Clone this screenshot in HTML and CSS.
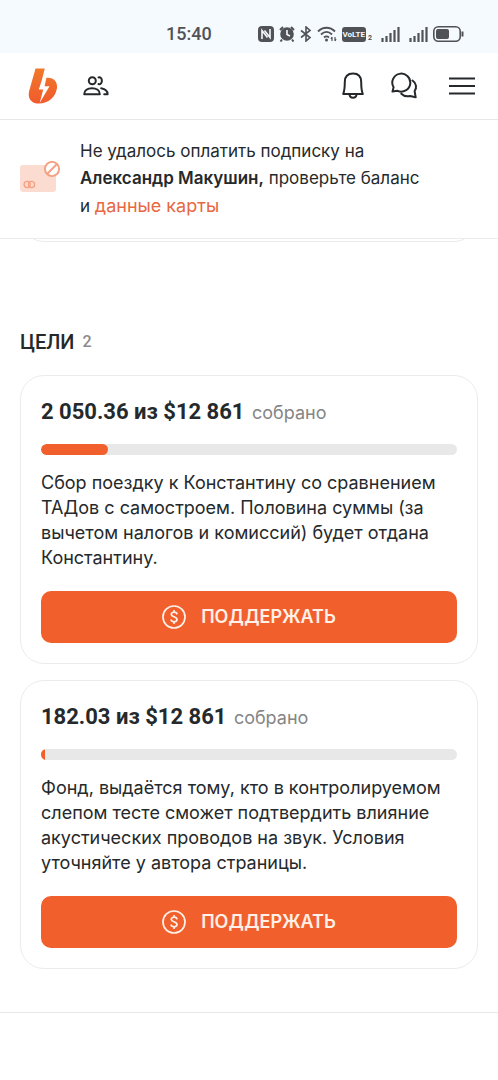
FILE: index.html
```html
<!DOCTYPE html>
<html lang="ru">
<head>
<meta charset="utf-8">
<meta name="viewport" content="width=device-width, initial-scale=1">
<title>Цели</title>
<link rel="stylesheet" href="styles.css">
</head>
<body>
<div class="status">
  <span class="status-time">15:40</span>
  <div class="status-icons">
    <svg width="16" height="16" viewBox="0 0 16 16"><rect width="16" height="16" rx="4" fill="#505256"/><path d="M4 13V4.500L9.500 11.500M12 3v8.500L6.500 4.500" fill="none" stroke="#f5faff" stroke-width="1.600"/></svg>
    <svg width="16" height="16" viewBox="0 0 16 16"><circle cx="8" cy="8" r="6.800" fill="#505256"/><path d="M1 4l3-3M15 4l-3-3M3 13.500L1.500 15.500M13 13.500l1.500 2" stroke="#505256" stroke-width="2"/><path d="M8 4v4.500l3 1.500" fill="none" stroke="#f5faff" stroke-width="1.600"/></svg>
    <svg width="12" height="16" viewBox="0 0 12 16"><path d="M1 4.500l9 7L6 15V1l4 3.500-9 7" fill="none" stroke="#505256" stroke-width="1.600"/></svg>
    <svg width="20" height="16" viewBox="0 0 20 16"><path d="M1 5.500c5-5 12-5 17 0M4 8.500c3.500-3.300 7.500-3.300 11 0M7 11.500c1.700-1.500 3.300-1.500 5 0" fill="none" stroke="#505256" stroke-width="1.800"/><circle cx="9.500" cy="14" r="1.500" fill="#505256"/><path d="M15 11v4M18 11v4M14 13l1-2M19 13l-1 2" stroke="#505256" stroke-width="1.200"/></svg>
    <span class="volte">VoLTE</span><span class="volte-sim">2</span>
    <svg class="signal" width="19" height="16" viewBox="0 0 19 16"><path d="M1.500 12v4M5.500 10v6M9.500 7v9M13.500 4v12M17.500 1v15" stroke="#505256" stroke-width="2.200"/></svg>
    <svg class="signal" width="19" height="16" viewBox="0 0 19 16"><path d="M1.500 12v4M5.500 10v6M9.500 7v9M13.500 4v12M17.500 1v15" stroke="#505256" stroke-width="2.200"/></svg>
    <svg width="31" height="16" viewBox="0 0 31 16"><rect x=".8" y=".8" width="26.400" height="14.400" rx="4.500" fill="none" stroke="#505256" stroke-width="1.600"/><rect x="3" y="3" width="13" height="10" rx="2" fill="#505256"/><path d="M29.500 5.500v5" stroke="#505256" stroke-width="2"/></svg>
  </div>
</div>

<header class="header">
  <a class="logo" href="#" aria-label="Главная">
    <svg width="30" height="36" viewBox="0 0 30 36"><defs><linearGradient id="flame" x1="0" y1="0" x2="0" y2="1"><stop offset="0" stop-color="#f0792b"/><stop offset="1" stop-color="#f15a2c"/></linearGradient></defs><path d="M7.500.5H16.800L14 11.500L18.500 9.800C25.500 8.800 30 13.500 28.900 20.500C27.500 29 20.500 35.500 11 35.500C3 35.500-.8 30 1.300 22.500Z" fill="url(#flame)"/><path d="M18.500 9.300L14.200 11L10.800 21.500H15.200L11.700 35L21.500 18.200H16.600Z" fill="#fff"/></svg>
  </a>
  <button class="icon-btn people" type="button" aria-label="Подписки">
    <svg width="26" height="20" viewBox="0 0 26 20"><g fill="none" stroke="#25292b" stroke-width="2" stroke-linejoin="round" stroke-linecap="round"><circle cx="9.300" cy="4.700" r="3.500"/><path d="M1.200 18.300C1.200 14.500 4.500 12.200 9 12.200S16.800 14.500 16.800 18.300ZM15.500 1.400C20 .5 20 9 15.500 8.100M18.200 12.300C22.200 13 24.600 15.200 24.600 18.300H21.200"/></g></svg>
  </button>
  <button class="icon-btn bell" type="button" aria-label="Уведомления">
    <svg width="22" height="28" viewBox="0 0 22 28"><g fill="none" stroke="#25292b" stroke-width="2" stroke-linejoin="round"><path d="M1.200 22C2.800 18 2.800 15 2.800 10C2.800 4.500 6 1.500 11 1.500S19.200 4.500 19.200 10C19.200 15 19.200 18 20.800 22Z"/><path d="M7.500 22C7.500 27 14.500 27 14.500 22"/></g></svg>
  </button>
  <button class="icon-btn chat" type="button" aria-label="Сообщения">
    <svg width="28" height="28" viewBox="0 0 28 28"><g fill="none" stroke="#25292b" stroke-width="2" stroke-linejoin="round" stroke-linecap="round"><path d="M2.500 19.500L3.600 15.300A9 9 0 1 1 7.500 18.800Z"/><path d="M22.500 8.500C26.500 11 27 16 24.600 19L25.700 25.300L20 24C16.500 24.800 13.500 24 11.300 21.800"/></g></svg>
  </button>
  <button class="icon-btn menu" type="button" aria-label="Меню">
    <svg width="28" height="20" viewBox="0 0 28 20"><path d="M1 2.500h26M1 10h26M1 17.500h26" stroke="#25292b" stroke-width="2.200"/></svg>
  </button>
</header>

<aside class="notice">
  <svg class="notice-icon" width="40" height="32" viewBox="0 0 40 32"><rect y="4" width="36" height="27" rx="3" fill="#fcdcd0"/><g fill="none" stroke="#f4a184"><circle cx="7.200" cy="23.500" r="3.100" stroke-width="1.300"/><circle cx="11.500" cy="23.500" r="3.100" stroke-width="1.300"/><circle cx="32" cy="8" r="7.100" fill="#fff" stroke-width="1.900"/><path d="M27 13L37 3" stroke-width="1.900"/></g></svg>
  <p class="notice-text">Не удалось оплатить подписку на <strong>Александр Макушин,</strong> проверьте баланс <span class="nowrap">и <a href="#">данные карты</a></span></p>
</aside>

<div class="previous"><div class="previous-card"></div></div>

<main class="goals">
  <h2 class="goals-title">ЦЕЛИ <span class="goals-count">2</span></h2>

  <section class="goal">
    <h3 class="goal-sum">2 050.36 из $12 861 <span class="goal-note">собрано</span></h3>
    <div class="track"><div class="fill" style="width:16%"></div></div>
    <p class="goal-text">Сбор поездку к Константину со сравнением ТАДов с самостроем. Половина суммы (за вычетом налогов и комиссий) будет отдана Константину.</p>
    <button class="support" type="button">
      <svg width="24" height="24" viewBox="0 0 24 24"><g fill="none" stroke="#fff0e8" stroke-width="1.700"><circle cx="12" cy="12" r="11"/><path d="M15 9.300C14.600 6.500 9.300 6.500 9.300 9.500C9.300 12.300 15 11.300 15 14.500C15 17.500 9.200 17.500 9 14.500M12 5v2.500M12 16.500V19"/></g></svg>
      ПОДДЕРЖАТЬ
    </button>
  </section>

  <section class="goal">
    <h3 class="goal-sum">182.03 из $12 861 <span class="goal-note">собрано</span></h3>
    <div class="track"><div class="fill fill-start" style="width:1%"></div></div>
    <p class="goal-text">Фонд, выдаётся тому, кто в контролируемом слепом тесте сможет подтвердить влияние акустических проводов на звук. Условия уточняйте у автора страницы.</p>
    <button class="support" type="button">
      <svg width="24" height="24" viewBox="0 0 24 24"><g fill="none" stroke="#fff0e8" stroke-width="1.700"><circle cx="12" cy="12" r="11"/><path d="M15 9.300C14.600 6.500 9.300 6.500 9.300 9.500C9.300 12.300 15 11.300 15 14.500C15 17.500 9.200 17.500 9 14.500M12 5v2.500M12 16.500V19"/></g></svg>
      ПОДДЕРЖАТЬ
    </button>
  </section>
</main>
<hr class="divider">
</body>
</html>
```
FILE: styles.css
```css
* {
  box-sizing: border-box;
}

body {
  margin: 0;
  background: #fff;
  color: #25292b;
  font-family: Inter, "Noto Sans", sans-serif;
  font-size: 18px;
}

h2, h3, p {
  margin: 0;
}

svg {
  display: block;
  flex: none;
}

.status {
  display: flex;
  align-items: center;
  justify-content: space-between;
  height: 53px;
  padding: 15px 34px 0 166px;
  background: #f5faff;
  color: #505256;
}

.status-time {
  font: 500 18px/22px Roboto, sans-serif;
}

.status-icons {
  display: flex;
  align-items: center;
  gap: 5px;
}

.volte {
  padding: 0 1px;
  border-radius: 3px;
  background: #505256;
  color: #f5faff;
  font: 700 8px/15px Roboto, sans-serif;
}

.volte-sim {
  align-self: flex-end;
  margin-left: -3px;
  font: 700 7px/8px Roboto, sans-serif;
}

.signal {
  margin-left: 4px;
}

.header {
  display: flex;
  align-items: center;
  height: 67px;
  padding: 0 22px 0 28px;
  border-bottom: 1px solid #e8e8e8;
}

.icon-btn {
  padding: 0;
  border: 0;
  background: none;
}

.people {
  margin: 0 auto 0 25px;
}

.chat {
  margin-left: 26px;
}

.menu {
  margin-left: 30px;
}

.notice {
  display: flex;
  align-items: center;
  gap: 20px;
  padding: 18px 20px;
  border-bottom: 1px solid #ececec;
}

.notice-icon {
  margin-bottom: 4px;
}

.notice-text {
  max-width: 350px;
  font-size: 17px;
  line-height: 27px;
}

.notice-text strong {
  font-weight: 600;
}

.notice-text a {
  color: #e8683f;
  font-size: 18px;
  text-decoration: none;
}

.nowrap {
  white-space: nowrap;
}

.previous {
  display: flex;
  align-items: flex-end;
  height: 3px;
  padding: 0 20px;
  overflow: hidden;
}

.previous-card {
  flex: 1;
  height: 48px;
  border: 1px solid #ececec;
  border-radius: 24px;
}

.goals {
  display: flex;
  flex-direction: column;
  gap: 16px;
  padding: 87px 20px 43px;
}

.goals-title {
  display: flex;
  align-items: center;
  gap: 8px;
  margin-bottom: 4px;
  font: 500 20px/26px Roboto, sans-serif;
}

.goals-count {
  color: #8b8b8b;
  font-size: 16px;
}

.goal {
  padding: 20px;
  border: 1px solid #ececec;
  border-radius: 24px;
}

.goal-sum {
  font: 700 22px/32px Roboto, sans-serif;
}

.goal-note {
  margin-left: 2px;
  color: #858585;
  font: 400 18px/32px Inter, "Noto Sans", sans-serif;
}

.track {
  height: 11px;
  margin: 15px 0;
  border-radius: 6px;
  background: #e8e8e8;
  overflow: hidden;
}

.fill {
  height: 100%;
  border-radius: 6px;
  background: #f1602c;
}

.fill-start {
  border-radius: 0;
}

.goal-text {
  line-height: 25px;
}

.support {
  display: flex;
  align-items: center;
  justify-content: center;
  gap: 15px;
  width: 100%;
  height: 52px;
  margin-top: 21px;
  padding: 0;
  border: 0;
  border-radius: 10px;
  background: #f1602c;
  color: #fff0e8;
  font: 600 18px/24px Inter, "Noto Sans", sans-serif;
}

.divider {
  margin: 0;
  border: 0;
  border-top: 1px solid #e8e8e8;
}
```
